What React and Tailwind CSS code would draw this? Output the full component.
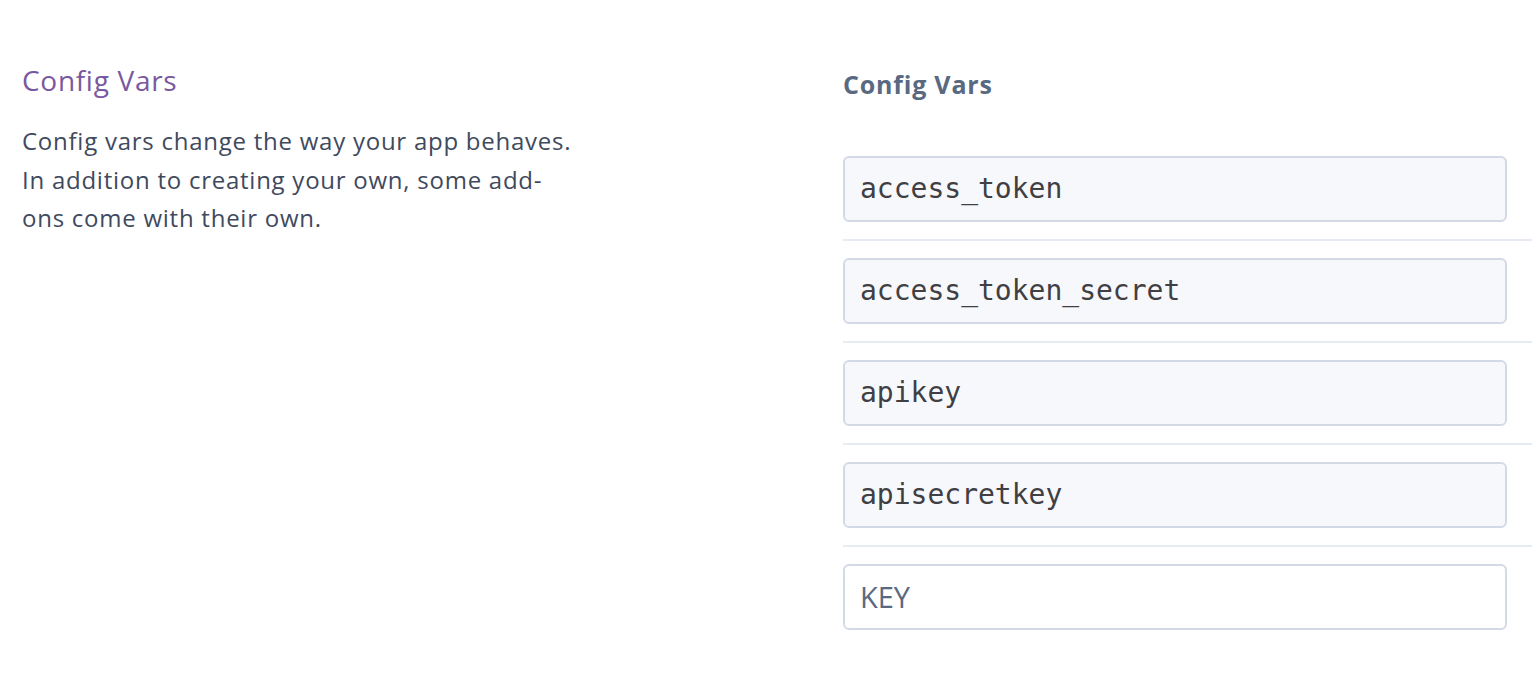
import React from "react";

const rows = ["access_token", "access_token_secret", "apikey", "apisecretkey"];

export default function App() {
  return (
    <div className="w-[1532px] h-[696px] bg-white flex overflow-hidden" style={{ fontFamily: "'Open Sans', sans-serif" }}>
      <div className="w-[843px] shrink-0 pl-[22px] pt-[60px]">
        <h2 className="text-[28px] leading-[40px] tracking-[0.7px] text-[#79589f] font-normal">Config Vars</h2>
        <p className="mt-[22px] w-[556px] text-[24px] leading-[38.5px] tracking-[0.75px] text-[#3f4a5d]">
          Config vars change the way your app behaves. In addition to creating your own, some add-ons come with their own.
        </p>
      </div>
      <div className="flex-1 pt-[64px]">
        <h3 className="text-[25px] leading-[40px] tracking-[0.8px] font-bold text-[#596981]">Config Vars</h3>
        <div className="mt-[52px] flex flex-col">
          {rows.map((r) => (
            <div key={r} className="flex flex-col">
              <div className="mr-[25px] h-[66px] rounded-[6px] border-2 border-[#d3dae6] bg-[#f7f8fb] flex items-center pl-[15px] text-[28px] text-[#3f3f44]" style={{ fontFamily: "'DejaVu Sans Mono', monospace" }}>
                {r}
              </div>
              <div className="mt-[17px] mb-[17px] h-[2px] bg-[#e7ebf3]" />
            </div>
          ))}
          <div className="mr-[25px] h-[66px] rounded-[6px] border-2 border-[#d3dae6] bg-white flex items-center pl-[15px] text-[29px] text-[#596981]">
            KEY
          </div>
        </div>
      </div>
    </div>
  );
}
